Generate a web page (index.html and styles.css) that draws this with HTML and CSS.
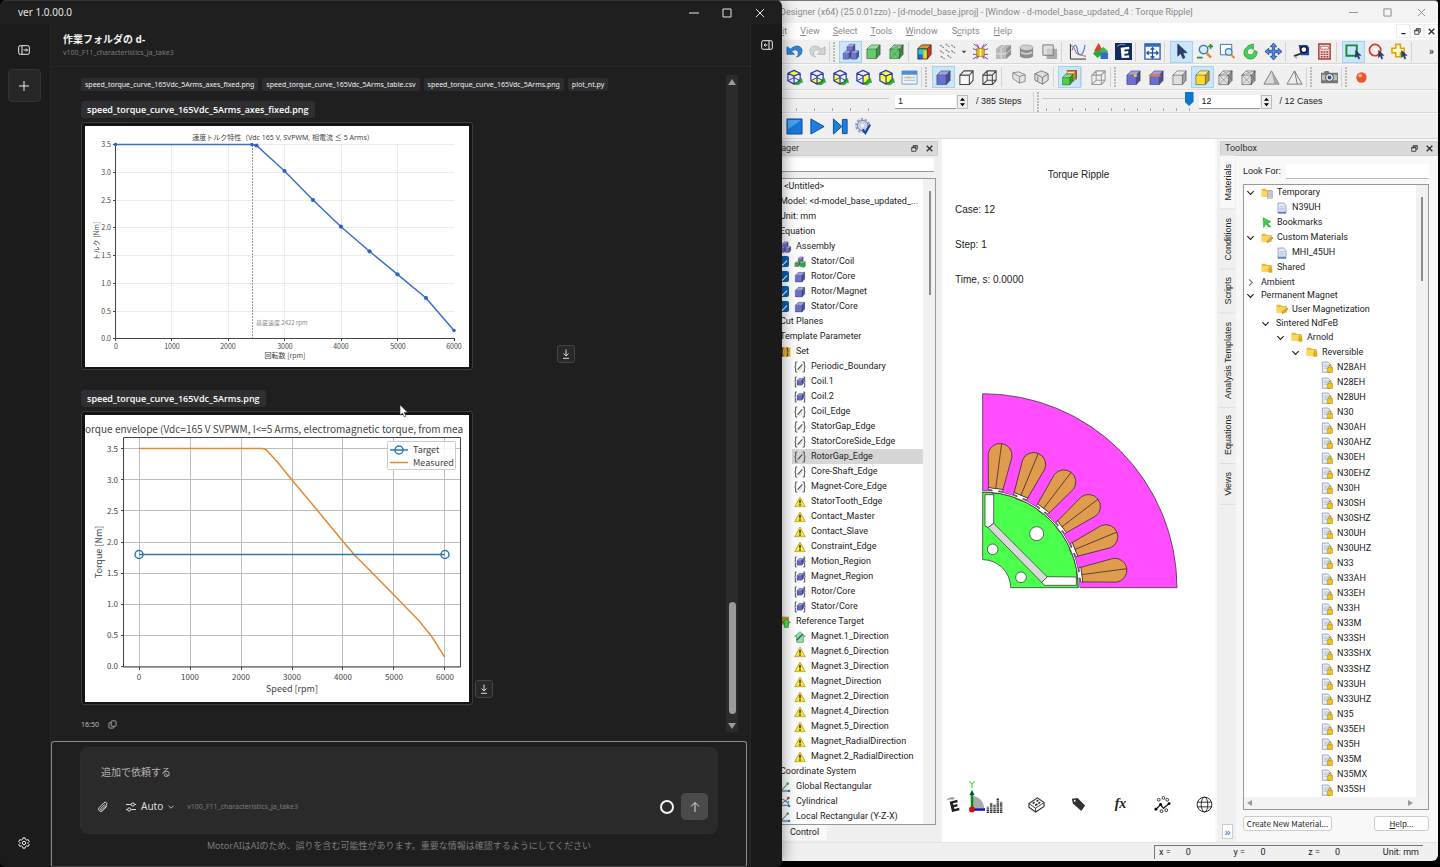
FILE: index.html
```html
<!DOCTYPE html>
<html lang="ja">
<head>
<meta charset="utf-8">
<title>MotorAI</title>
<link rel="stylesheet" href="styles.css">
</head>
<body>
<svg class="defs" aria-hidden="true">
  <symbol id="cube" viewBox="0 0 18 18"><path d="M2 6.5h10v10H2z" fill="currentColor"/><path d="M2 6.5 6.5 2H16l-4 4.500z" fill="currentColor"/><path d="M2 6.500 6.500 2H16l-4 4.500z" fill="#fff" opacity=".35"/><path d="M12 6.500 16 2v10l-4 4.500z" fill="currentColor"/><path d="M12 6.500 16 2v10l-4 4.500z" opacity=".28"/><path d="M2 6.500 6.500 2H16v10l-4 4.500H2zM2 6.500h10v10M12 6.500 16 2" fill="none" stroke="#000" stroke-opacity=".45" stroke-width=".9"/></symbol>
  <symbol id="wire" viewBox="0 0 18 18"><path d="M2 6.500h10v10H2zM2 6.500 6.500 2H16v10l-4 4.500M12 6.500 16 2" fill="#f6f6f6" stroke="currentColor" stroke-width="1.100"/></symbol>
  <symbol id="wire2" viewBox="0 0 18 18"><path d="M2 6.500h10v10H2zM2 6.500 6.500 2H16v10l-4 4.500M12 6.500 16 2M6.500 2v10H16M6.500 12 2 16.500" fill="none" stroke="currentColor" stroke-width="1.100"/></symbol>
  <symbol id="meshcube" viewBox="0 0 18 18"><use href="#cube"/><path d="m2 6.500 10 10M12 6.500l-10 10M2 6.500 16 2M6.500 2 12 6.500M12 16.500 16 2M12 6.500l4 5.500" stroke="#333" stroke-opacity=".5" stroke-width=".7"/></symbol>
  <symbol id="hex" viewBox="0 0 18 18"><path d="m8.500 1.500 6.500 3v8l-6.500 3.500L2 12.500v-8zM2 4.500l6.500 3 6.500-3M8.500 7.500V16" fill="none" stroke="#2a37b8" stroke-width="1.300" stroke-linejoin="round"/><path d="M10 14.500c2 .5 3.500-.5 4-2l-1.500-.5 4-2 1 4.500-1.500-.7c-1 2.500-3.500 3.500-6 2.700z" fill="#23b52b" stroke="#0c7a16" stroke-width=".5"/></symbol>
  <symbol id="asm" viewBox="0 0 18 18"><g color="#6f74d8"><use href="#cube" x="4" y="0" width="11" height="11"/><use href="#cube" x="0" y="7" width="11" height="11"/><use href="#cube" x="8" y="7" width="11" height="11"/></g></symbol>
  <symbol id="asmcoil" viewBox="0 0 18 18"><g color="#7076c8"><use href="#cube" x="5" y="0" width="10" height="10"/></g><g color="#4fa357"><use href="#cube" x="0" y="7" width="10" height="10"/><use href="#cube" x="8" y="7" width="10" height="10"/></g><circle cx="14" cy="14" r="3.500" fill="#23b13b"/></symbol>
  <symbol id="edge" viewBox="0 0 18 18"><path d="M5 1.500H2.500V8L1 9l1.500 1v6.500H5M13 1.500h2.500V8L17 9l-1.500 1v6.500H13" fill="none" stroke="#444" stroke-width="1.400"/><path d="m5.500 13 7-8" stroke="#48505c" stroke-width="1.800"/><path d="m7.500 14.500 5-5.500" stroke="#bbb" stroke-width="1.200"/></symbol>
  <symbol id="region" viewBox="0 0 18 18"><path d="M4 1.500H2V8L1 9l1 1v6.500h2M14 1.500h2V8l1 1-1 1v6.500h-2" fill="none" stroke="#444" stroke-width="1.400"/><g color="#6166d0"><use href="#cube" x="3" y="2" width="13" height="13"/></g></symbol>
  <symbol id="warn" viewBox="0 0 18 18"><path d="M9 1.500 17 16H1z" fill="#fbe22b" stroke="#a98f1d" stroke-linejoin="round"/><path d="M9 5.500v5.500M9 12.500v2" stroke="#222" stroke-width="2"/></symbol>
  <symbol id="set" viewBox="0 0 18 18"><path d="M1 2h16v14H1z" fill="#e3b437"/><path d="M7 3H5v5L4 9l1 1v5h2M11 3h2v5l1 1-1 1v5h-2" fill="none" stroke="#4a3a10" stroke-width="1.500"/></symbol>
  <symbol id="target" viewBox="0 0 18 18"><path d="M0 1h15v12H0z" fill="#c99a35"/><path d="m11 4 6 6h-3v7H8v-7H5z" fill="#57e05a" stroke="#1b7d27"/></symbol>
  <symbol id="house" viewBox="0 0 18 18"><path d="m9 1 8 7h-3v9H4V8H1z" fill="#8be6a6" stroke="#3f8f59"/><path d="m4 14 9-9" stroke="#48505c" stroke-width="2"/></symbol>
  <symbol id="axes" viewBox="0 0 18 18"><path d="M3 15 12 5" stroke="#555" stroke-width="1.400"/><path d="M3 15h12" stroke="#2b66a5" stroke-width="1.600"/><circle cx="13" cy="4" r="2" fill="#49a84c"/><circle cx="15" cy="15" r="2" fill="#2586c9"/></symbol>
  <symbol id="cyl" viewBox="0 0 18 18"><path d="M2 5c8 0 10 4 13 9M2 13 14 4M3 14h12" fill="none" stroke="#3b78a8" stroke-width="1.500"/><circle cx="14" cy="3" r="2" fill="#c72d2d"/><circle cx="15" cy="15" r="2" fill="#2586c9"/><circle cx="14" cy="9" r="1.500" fill="#49a84c"/></symbol>
  <symbol id="folder" viewBox="0 0 18 18"><path d="M1 2.500h6l1.500 2H16v10H1z" fill="#e9b93a"/><path d="M1 6h15v9H1z" fill="#ffd55c"/></symbol>
  <symbol id="flock" viewBox="0 0 18 18"><use href="#folder"/><path d="M11 10h6v6h-6z" fill="#e0a70f"/><path d="M12.500 10V8.500a1.500 1.500 0 0 1 3 0V10" fill="none" stroke="#a97f17"/></symbol>
  <symbol id="fpen" viewBox="0 0 18 18"><use href="#folder"/><path d="m9 16 1-3 6-6 2 2-6 6z" fill="#f3a530" stroke="#8b7134" stroke-width=".7"/></symbol>
  <symbol id="ftemp" viewBox="0 0 18 18"><use href="#folder"/><path d="M10 6h7v11h-7z" fill="#dfe5ec" stroke="#8793a3"/><path d="M12 8v7M15 8v7" stroke="#8793a3"/></symbol>
  <symbol id="doc" viewBox="0 0 18 18"><path d="M3 1.500h8.500L15 5v12H3z" fill="#e4ecfa" stroke="#72829f"/><path d="M5 7h8M5 9.500h8M5 12h8" stroke="#9fb4da"/><path d="M3 14.500h12V17H3z" fill="#5f7fc0"/></symbol>
  <symbol id="dlock" viewBox="0 0 18 18"><path d="M2 1.500h8.500L14 5v12H2z" fill="#e9eef7" stroke="#79869c"/><path d="M4 6h8M4 8.500h6M4 11h6" stroke="#9fb4da"/><path d="M9.500 10h8v7h-8z" fill="#f3c51a" stroke="#9b7c0c" stroke-width=".7"/><path d="M11.500 10V8a2 2 0 0 1 4 0v2" fill="none" stroke="#a58617" stroke-width="1.300"/></symbol>
  <symbol id="flag" viewBox="0 0 18 18"><path d="m3 1 12 6-5 2.500 5 5-4 .5-4-4-3 5z" fill="#43c94b" stroke="#2a8e36" stroke-width=".7"/></symbol>
  <symbol id="down" viewBox="0 0 10 10"><path d="m1.500 3.500 3.500 3.500 3.500-3.500" fill="none" stroke="#222" stroke-width="1.300"/></symbol>
  <symbol id="right" viewBox="0 0 10 10"><path d="m3.500 1.500 3.500 3.500-3.500 3.500" fill="none" stroke="#777" stroke-width="1.300"/></symbol>
  <symbol id="restore" viewBox="0 0 10 10"><path d="M3 3V1h6v5H7M1 3.500h6V9H1zM1 4h6M3 1.500h6" fill="none" stroke="currentColor" stroke-width="1.200"/></symbol>
  <symbol id="close" viewBox="0 0 10 10"><path d="m1 1 8 8M9 1 1 9" stroke="currentColor" stroke-width="var(--w,1)"/></symbol>
  <symbol id="min" viewBox="0 0 10 10"><path d="M0 5h10" stroke="currentColor"/></symbol>
  <symbol id="max" viewBox="0 0 10 10"><path d="M1 1h8v8H1z" fill="none" stroke="currentColor"/></symbol>
  <symbol id="dl" viewBox="0 0 10 10"><path d="M5 .5v6M2.500 4.500 5 7l2.500-2.500M2 9.300h6" fill="none" stroke="currentColor"/></symbol>
  <symbol id="mag" viewBox="0 0 18 18"><circle cx="8" cy="7" r="4.500" fill="#d6ecfa" stroke="#3c78b8" stroke-width="1.500"/><path d="m11 10.500 5 5" stroke="#d88a33" stroke-width="2.500"/></symbol>
  <symbol id="ptr" viewBox="0 0 18 18"><path d="M5 1v13l3.200-3 2.300 5.500 2.200-1-2.200-5.200H15z" fill="#27406b" stroke="#16294a" stroke-width=".6"/></symbol>
</svg>

<div class="desktop">
<main class="chat">
  <header class="chat-title">
    <span>ver 1.0.00.0</span>
    <div class="caps">
      <button aria-label="最小化"><svg><use href="#min"/></svg></button>
      <button aria-label="最大化"><svg><use href="#max"/></svg></button>
      <button aria-label="閉じる"><svg><use href="#close"/></svg></button>
    </div>
  </header>
  <nav class="rail">
    <button class="rail-btn" aria-label="サイドバーを開く"><svg viewBox="0 0 12 12"><rect x=".7" y="1.700" width="10.600" height="8.600" rx="1.500"/><path d="M4 2v8M5.500 6h4M8 4.500 9.500 6 8 7.500"/></svg></button>
    <button class="rail-btn boxed" aria-label="新しいチャット"><svg viewBox="0 0 12 12"><path d="M6 1v10M1 6h10"/></svg></button>
    <button class="rail-btn gear" aria-label="設定"><svg viewBox="0 0 12 12"><path d="m5 .8 2 0 .4 1.500 1.300.8 1.500-.5 1 1.800L10.100 5.500v1l1.100 1.100-1 1.800-1.500-.5-1.300.8L7 11.200H5l-.4-1.500-1.300-.8-1.500.5-1-1.800L1.900 6.500v-1L.8 4.400l1-1.800 1.500.5 1.300-.8z"/><circle cx="6" cy="6" r="1.700"/></svg></button>
  </nav>
  <section class="thread">
    <header class="thread-head">
      <h1>作業フォルダの d-</h1>
      <p>v100_F11_characteristics_ja_take3</p>
    </header>
    <div class="scroll">
      <div class="messages">
        <div class="chips">
          <a href="#f1">speed_torque_curve_165Vdc_5Arms_axes_fixed.png</a>
          <a href="#f2">speed_torque_curve_165Vdc_5Arms_table.csv</a>
          <a href="#f3">speed_torque_curve_165Vdc_5Arms.png</a>
          <a href="#f4">plot_nt.py</a>
        </div>
        <h2 class="file" id="f1">speed_torque_curve_165Vdc_5Arms_axes_fixed.png</h2>
        <div class="shot wide">
          <figure>
            <svg class="chart one" viewBox="0 0 384 241" role="img" aria-label="速度トルク特性">
              <path class="g1" d="M86.500 18.500v194M143.500 18.500v194M199.500 18.500v194M256.500 18.500v194M312.500 18.500v194M30 18.500h339M30 46.500h339M30 74.500h339M30 101.500h339M30 129.500h339M30 157.500h339M30 185.500h339"/>
              <path class="ax" d="M30.500 18.500v194H369.500M28 18.500h2M28 46.500h2M28 74.500h2M28 101.500h2M28 129.500h2M28 157.500h2M28 185.500h2M28 212.500h2M30.500 212v3M86.500 212v3M143.500 212v3M199.500 212v3M256.500 212v3M312.500 212v3M369.500 212v3"/>
              <path class="dash" d="M167.500 19v193"/>
              <path class="line" d="M30.500 18.500H167l4.500 1 28 25.500 28.500 29 28 26.700 28.500 24.600 28 23 28.500 23.700 28 32.500"/>
              <g class="dots"><circle cx="30.500" cy="18.500" r="1.800"/><circle cx="167" cy="18.500" r="1.800"/><circle cx="171.500" cy="19.500" r="2.100"/><circle cx="199.500" cy="45" r="2.100"/><circle cx="228" cy="74" r="2.100"/><circle cx="256" cy="100.700" r="2.100"/><circle cx="284.500" cy="125.300" r="2.100"/><circle cx="312.500" cy="148.300" r="2.100"/><circle cx="341" cy="172" r="2.100"/><circle cx="369" cy="204.500" r="1.800"/></g>
              <text class="mid ttl1" x="198" y="14">速度トルク特性（Vdc 165 V, SVPWM, 相電流 ≤ 5 Arms）</text>
              <g class="end"><text x="26" y="21">3.5</text><text x="26" y="49">3.0</text><text x="26" y="77">2.5</text><text x="26" y="104">2.0</text><text x="26" y="132">1.5</text><text x="26" y="160">1.0</text><text x="26" y="188">0.5</text><text x="26" y="215">0.0</text></g>
              <g class="mid"><text x="31" y="223">0</text><text x="87" y="223">1000</text><text x="143" y="223">2000</text><text x="200" y="223">3000</text><text x="256" y="223">4000</text><text x="313" y="223">5000</text><text x="369" y="223">6000</text><text x="200" y="232">回転数 [rpm]</text><text transform="translate(14 115) rotate(-90)">トルク [Nm]</text></g>
              <text class="note" x="171" y="199">基底速度 2422 rpm</text>
            </svg>
          </figure>
          <button class="dl" aria-label="ダウンロード"><svg><use href="#dl"/></svg></button>
        </div>
        <h2 class="file" id="f3">speed_torque_curve_165Vdc_5Arms.png</h2>
        <div class="shot">
          <figure>
            <svg class="chart two" viewBox="0 0 384 287" role="img" aria-label="Torque envelope">
              <path class="g2" d="M54.500 23v229M105.500 23v229M156.500 23v229M207.500 23v229M257.500 23v229M308.500 23v229M359.500 23v229M39 251.500h336M39 220.500h336M39 189.500h336M39 158.500h336M39 127.500h336M39 95.500h336M39 64.500h336M39 33.500h336"/>
              <path class="orange" d="M54 33.500H177l4 1 11 12 15 18.500 25.500 30.500 25.500 31 12 14 13 13 25.500 26 25.700 26.500 12.500 15.500 13 20.700"/>
              <path class="ax" d="M38.500 22.500h337v229.500h-337zM36 251.500h3M36 220.500h3M36 189.500h3M36 158.500h3M36 127.500h3M36 95.500h3M36 64.500h3M36 33.500h3M54.500 252v3M105.500 252v3M156.500 252v3M207.500 252v3M257.500 252v3M308.500 252v3M359.500 252v3"/>
              <path class="teal" d="M54 139.500h306"/><circle class="teal" cx="54" cy="139.500" r="4"/><circle class="teal" cx="360" cy="139.500" r="4"/>
              <rect class="legend" x="302.500" y="26.500" width="68" height="28" rx="1"/>
              <path class="teal" d="M305 35h18"/><circle class="teal" cx="314" cy="35" r="4"/><path class="orange" d="M305 47.500h18"/>
              <g class="big"><text x="328" y="38">Target</text><text x="328" y="51">Measured</text></g>
              <text class="head" x="0" y="18">orque envelope (Vdc=165 V SVPWM, I&lt;=5 Arms, electromagnetic torque, from mea</text>
              <g class="end"><text x="33" y="37">3.5</text><text x="33" y="68">3.0</text><text x="33" y="99">2.5</text><text x="33" y="130">2.0</text><text x="33" y="161">1.5</text><text x="33" y="192">1.0</text><text x="33" y="223">0.5</text><text x="33" y="254">0.0</text></g>
              <g class="mid"><text x="54" y="265">0</text><text x="105" y="265">1000</text><text x="156" y="265">2000</text><text x="207" y="265">3000</text><text x="258" y="265">4000</text><text x="309" y="265">5000</text><text x="360" y="265">6000</text></g>
              <g class="mid big"><text x="207" y="277">Speed [rpm]</text><text transform="translate(17 137) rotate(-90)">Torque [Nm]</text></g>
            </svg>
          </figure>
          <button class="dl" aria-label="ダウンロード"><svg><use href="#dl"/></svg></button>
        </div>
        <div class="stamp"><time>16:50</time><button aria-label="コピー"><svg viewBox="0 0 10 10"><rect x="3.500" y="1" width="5.500" height="6" rx="1"/><path d="M3.500 3H2a1 1 0 0 0-1 1v4a1 1 0 0 0 1 1h3.500a1 1 0 0 0 1-1V7"/></svg></button></div>
      </div>
      <div class="bar"><i class="up"></i><i class="thumb"></i><i class="dn"></i></div>
    </div>
    <form class="composer">
      <div class="card">
        <textarea aria-label="メッセージ" rows="1" placeholder="追加で依頼する"></textarea>
        <div class="tools">
          <button type="button" class="flat" aria-label="添付"><svg viewBox="0 0 12 12"><path d="M10 5 5.500 9.800a2.300 2.300 0 0 1-3.300-3.200L7 1.700a1.700 1.700 0 0 1 2.400 2.400L4.900 8.700a.8.8 0 0 1-1.200-1.200L7.800 3.500"/></svg></button>
          <button type="button" class="flat auto"><svg viewBox="0 0 12 12"><path d="M1 3.500h5M9.500 3.500H11M1 8.500h1.500M6 8.500h5"/><circle cx="7.800" cy="3.500" r="1.600"/><circle cx="4.200" cy="8.500" r="1.600"/></svg>Auto<svg class="tiny" viewBox="0 0 10 10"><path d="m2 3.500 3 3 3-3"/></svg></button>
          <span class="path">v100_F11_characteristics_ja_take3</span>
          <span class="ring"></span>
          <button type="button" class="send" aria-label="送信"><svg viewBox="0 0 12 12"><path d="M6 11V1.500M2 5.500l4-4 4 4"/></svg></button>
        </div>
      </div>
      <p>MotorAIはAIのため、誤りを含む可能性があります。重要な情報は確認するようにしてください</p>
    </form>
  </section>
  <aside class="side"><button class="rail-btn" aria-label="パネルを開く"><svg viewBox="0 0 12 12"><rect x=".7" y="1.700" width="10.600" height="8.600" rx="1.500"/><path d="M8 2v8M6.500 6H3M4.500 4.500 3 6l1.500 1.500"/></svg></button></aside>
  <svg class="pointer" viewBox="0 0 10 14"><path d="M1 .8v10.500l2.500-2.200L5.300 13l1.700-.8-1.700-3.800h3.400z"/></svg>
</main>

<section class="cad">
  <header class="cad-title"><span>Designer (x64) (25.0.01zzo) - [d-model_base.jproj] - [Window - d-model_base_updated_4 : Torque Ripple]</span>
    <div class="caps"><button aria-label="Minimize"><svg><use href="#min"/></svg></button><button aria-label="Maximize"><svg><use href="#max"/></svg></button><button aria-label="Close"><svg><use href="#close"/></svg></button></div>
  </header>
  <nav class="menu"><a href="#e">Ed<u>i</u>t</a><a href="#v"><u>V</u>iew</a><a href="#s"><u>S</u>elect</a><a href="#t"><u>T</u>ools</a><a href="#w"><u>W</u>indow</a><a href="#c">S<u>c</u>ripts</a><a href="#h"><u>H</u>elp</a>
    <div class="mdi"><button aria-label="Minimize child"><svg viewBox="0 0 10 10"><path d="M2 8h6" stroke="#222" stroke-width="2"/></svg></button><button aria-label="Restore child"><svg><use href="#restore"/></svg></button><button class="x" aria-label="Close child"><svg><use href="#close"/></svg></button></div>
  </nav>
  <div class="bar-row">
    <button aria-label="Undo"><svg viewBox="0 0 18 18"><path d="M1 4v8h8l-3-3c3-3 7-2 7 2 0 2-1 3-2 4 4-1 6-3 6-7 0-5-7-7-12-1.500z" fill="#2e86d6" stroke="#14589e" stroke-width=".7"/></svg></button>
    <button aria-label="Redo"><svg viewBox="0 0 18 18"><path d="M17 4v8H9l3-3C9 6 5 7 5 11c0 2 1 3 2 4-4-1-6-3-6-7 0-5 7-7 12-1.500z" fill="#d3d3d3" stroke="#a8a8a8" stroke-width=".7"/></svg></button>
    <i class="grip w10"></i>
    <button class="on" aria-label="Geometry"><svg><use href="#asm"/></svg></button>
    <button class="green" aria-label="Solid"><svg><use href="#cube"/></svg></button>
    <button class="green" aria-label="Mesh"><svg><use href="#meshcube"/></svg></button>
    <i class="sep"></i>
    <button aria-label="Contour"><svg viewBox="0 0 18 18"><path d="M2 6h10v11H2z" fill="#43c86f"/><path d="M2 12h5v5H2z" fill="#2364dc"/><path d="M2 6h5v6H2z" fill="#25c6d8"/><path d="M8 8h4v9H8z" fill="#f2d629"/><path d="m2 6 4-4h10l-4 4z" fill="#ef8f25"/><path d="m12 6 4-4v10l-4 5z" fill="#d53422"/><path d="m2 6 4-4h10v10l-4 5H2zM2 6h10v11M12 6l4-4" fill="none" stroke="#222" stroke-width=".8"/></svg></button>
    <button aria-label="Vectors"><svg viewBox="0 0 18 18"><path d="m1 2 4 3M7 1l4 3M13 2l4 3M1 8l4 3M7 7l4 3M13 8l4 3M2 14l4 3M9 13l4 3" stroke="#777" stroke-width="1.100" stroke-dasharray="2.500 .8"/></svg></button>
    <button class="drop" aria-label="Vector options"><svg viewBox="0 0 10 10"><path d="M1 3h8L5 7z" fill="#444"/></svg></button>
    <button aria-label="Flux lines"><svg viewBox="0 0 18 18"><path d="M8 6 2 1M8 6 5 1M10 6l6-5M10 6l3-5M8 13l-7 4M8 13l-3 4M10 13l7 4M10 13l3 4M6 8 1 6M12 8l5-2M6 12H1M12 12h5" stroke="#8136a8"/><path d="M5 6h8v8H5z" fill="#e3b522" stroke="#8b6b08" stroke-width=".7"/><path d="M9 6v8" stroke="#fff08a" stroke-width="2"/></svg></button>
    <button aria-label="Section"><svg viewBox="0 0 18 18"><path d="m1 6 5-4h11v10l-5 5H1z" fill="#b9b9b9"/><path d="m12 6 5-4v10l-5 5z" fill="#8f8f8f"/><path d="M6.500 6v11M1 11.500h11l5-5M6 6l5-4" fill="none" stroke="#e3e3e3"/></svg></button>
    <button aria-label="Isosurface"><svg viewBox="0 0 18 18"><path d="M2 5v9c2 3 12 3 14 0V5z" fill="#8c8c8c"/><ellipse cx="9" cy="5" rx="7" ry="3" fill="#cfcfcf" stroke="#888" stroke-width=".6"/><path d="M3 10c4 2 8 2 12 0" stroke="#ccc" fill="none" stroke-width="2"/></svg></button>
    <button aria-label="Layers"><svg viewBox="0 0 18 18"><path d="M6 6h11v11H6z" fill="#aaa"/><path d="M2 2h11v11H2z" fill="#d8d8d8" fill-opacity=".7" stroke="#777"/></svg></button>
    <i class="sep"></i>
    <button aria-label="Graph"><svg viewBox="0 0 18 18"><path d="M1.500 1v16H18" fill="none" stroke="#222"/><path d="M2 3c5 0 4 9 8 9s4 2 8 2" fill="none" stroke="#d43c3c"/><path d="M3 8c3-8 5-7 6 0s6 7 8-6" fill="none" stroke="#3b83d8" stroke-width="1.200"/></svg></button>
    <button aria-label="Probe"><svg viewBox="0 0 18 18"><path d="m7 0 5 9H2z" fill="#e23a2b"/><path d="m12 4 5 5-5 5-5-5z" fill="#3cba3e"/><path d="m1 11 5-4 5 4-5 5z" fill="#28a93a"/><path d="M9 10h8v7H9z" fill="#3a67d0"/></svg></button>
    <button aria-label="Express"><svg viewBox="0 0 18 18"><path d="M0 0h18v18H0z" fill="#102b61"/><path d="m6 5 9-1v2.500l-5 .5v2l4-.5V11l-4 .5v2l5-.5v2.500L7 16z" fill="#fff"/><path d="M2 4c3-3 6-3 9-2" stroke="#8ea6d6" fill="none"/></svg></button>
    <i class="sep w6"></i>
    <button aria-label="Fit all"><svg viewBox="0 0 18 18"><path d="M1 1h16v16H1z" fill="#fff" stroke="#1f5cb0" stroke-width="1.400"/><path d="M1 1h16v3H1z" fill="#2c6bc4"/><path d="M9 5v11M3 10.500h12M7 7l2-2 2 2M7 14l2 2 2-2M5 8.500l-2 2 2 2M13 8.500l2 2-2 2" stroke="#1b4f9f" fill="none" stroke-width="1.300"/></svg></button>
    <i class="sep w6"></i>
    <button class="on" aria-label="Select"><svg><use href="#ptr"/></svg></button>
    <button aria-label="Zoom"><svg viewBox="0 0 18 18"><use href="#mag"/><path d="M13 3.500h5M15.500 1v5M1 15.500h6" stroke="#20962a" stroke-width="1.800"/></svg></button>
    <button aria-label="Zoom area"><svg viewBox="0 0 18 18"><path d="M1.500 1.500h12v11h-12z" fill="#fff" stroke="#3c6eb3"/><use href="#mag" x="4" y="4" width="14" height="14"/></svg></button>
    <button aria-label="Rotate"><svg viewBox="0 0 18 18"><path d="M6 3 12 1v6l-2-1.500C6 6 5 9 6 11s5 2 6 0l1-3 3 1c0 5-3 8-7 8s-7-3-7-7c0-3 2-5 4.500-6z" fill="#46d354" stroke="#1b8e2a" stroke-width=".7"/></svg></button>
    <button aria-label="Pan"><svg viewBox="0 0 18 18"><path d="m9 0 3.500 4h-2.300v3.800H14V5.500L18 9l-4 3.500v-2.300h-3.800V14h2.300L9 18l-3.500-4h2.300v-3.800H4v2.300L0 9l4-3.500v2.300h3.800V4H5.500z" fill="#4d8ce0" stroke="#193d83" stroke-width=".8"/></svg></button>
    <i class="sep"></i>
    <button aria-label="Measure"><svg viewBox="0 0 18 18"><path d="M6 2h9l2 3v8H8z" fill="#1842b8"/><circle cx="11.500" cy="7" r="3.200" fill="#fff" stroke="#111" stroke-width="1.300"/><path d="m1 14 8-3" stroke="#333" stroke-width="2"/><path d="M1 14h3v3z" fill="#999"/></svg></button>
    <button aria-label="Calculator"><svg viewBox="0 0 18 18"><path d="M3 1h12v16H3z" fill="#f4d9d5" stroke="#9b3c37" stroke-width="1.500"/><path d="M5 3.500h8v3H5z" fill="#fff" stroke="#9b3c37" stroke-width=".7"/><path d="M5 9.500h8M5 12h8M5 14.500h8" stroke="#a33" stroke-width="1.500" stroke-dasharray="2 1"/></svg></button>
    <i class="sep w6"></i>
    <button class="on" aria-label="Rectangle select"><svg viewBox="0 0 18 18"><path d="M1.500 2.500h11v11h-11z" fill="none" stroke="#148a39" stroke-width="2"/><use href="#ptr" x="8" y="7" width="11" height="11"/></svg></button>
    <button aria-label="Circle select"><svg viewBox="0 0 18 18"><circle cx="7.500" cy="7.500" r="6" fill="none" stroke="#d83a2b" stroke-width="1.800"/><use href="#ptr" x="8" y="7" width="11" height="11"/></svg></button>
    <button aria-label="Polygon select"><svg viewBox="0 0 18 18"><path d="M5 1.500h5v4h4v5h-4v4H5v-4H1v-5h4z" fill="#fff9cf" stroke="#e2a60c" stroke-width="1.700"/><use href="#ptr" x="8" y="7" width="11" height="11"/></svg></button>
    <i class="sep"></i>
    <span class="more">»</span>
  </div>
  <div class="bar-row tall">
    <button aria-label="Top"><svg viewBox="0 0 18 18"><path d="m8.500 1.500 6.500 3-6.500 3-6.500-3z" fill="#ff3"/><use href="#hex"/><path d="M2 12.500 8.500 9l6.500 3.500" fill="none" stroke="#2a37b8"/></svg></button>
    <button aria-label="Bottom"><svg viewBox="0 0 18 18"><path d="m8.500 9 6.500 3.500L8.500 16 2 12.500z" fill="#ff3"/><use href="#hex"/><path d="m2 12.500 6.500-3.500 6.500 3.500" fill="none" stroke="#2a37b8"/></svg></button>
    <button aria-label="Left"><svg viewBox="0 0 18 18"><path d="M2 4.500 8.500 8v8L2 12.500z" fill="#ff3"/><use href="#hex"/><path d="M2 12.500 8.500 9l6.500 3.500" fill="none" stroke="#2a37b8"/></svg></button>
    <button aria-label="Right"><svg viewBox="0 0 18 18"><path d="M15 4.500 8.500 8v8l6.500-3.500z" fill="#ff3"/><use href="#hex"/><path d="M2 12.500 8.500 9" fill="none" stroke="#2a37b8"/></svg></button>
    <button aria-label="Isometric"><svg viewBox="0 0 18 18"><path d="m8.500 1.500 6.500 3v8L8.500 16 2 12.500v-8z" fill="#ff3"/><use href="#hex"/></svg></button>
    <button aria-label="View list"><svg viewBox="0 0 18 18"><path d="M1 2h16v14H1z" fill="#eef3fa" stroke="#7c9fc9"/><path d="M1 2h16v4H1z" fill="#4a8fd4"/><path d="M3 9h12M3 12h12" stroke="#b9c7d9" stroke-width="1.500"/><path d="M6 9h4" stroke="#e3c44c" stroke-width="2"/></svg></button>
    <i class="grip w11"></i>
    <button class="on blue" aria-label="Shaded"><svg><use href="#cube"/></svg></button>
    <button class="dark" aria-label="Hidden line"><svg><use href="#wire"/></svg></button>
    <button class="dark" aria-label="Wireframe"><svg><use href="#wire2"/></svg></button>
    <i class="sep w6"></i>
    <button aria-label="Clip"><svg viewBox="0 0 18 18"><path d="M3 4 9 3l7 3v7l-6 2-7-5z" fill="#e4e4e4" stroke="#888"/><path d="m3 4 7 4v7M10 8l6-2" fill="none" stroke="#888"/></svg></button>
    <button aria-label="Clip box"><svg viewBox="0 0 18 18"><path d="m2 5 7-3 7 3v7l-6 4-8-4z" fill="#e0e0e0" stroke="#777"/><path d="m2 5 8 4v7M10 9l6-4M5 8v5" fill="none" stroke="#777"/></svg></button>
    <i class="sep"></i>
    <button class="on" aria-label="Overlay"><svg viewBox="0 0 18 18"><g color="#f6e53b"><use href="#cube" x="4" y="0" width="14" height="14"/></g><path d="M6 2h10v9" fill="none" stroke="#c8291f" stroke-width="1.300"/><g color="#4bcf45"><use href="#cube" x="0" y="4" width="14" height="14"/></g></svg></button>
    <i class="sep w6"></i>
    <button class="mid-gray" aria-label="Transparent"><svg><use href="#wire2"/></svg></button>
    <i class="grip w12"></i>
    <button class="blue" aria-label="Vertex"><svg viewBox="0 0 18 18"><use href="#cube"/><circle cx="11" cy="7" r="1.800" fill="#f3c423"/></svg></button>
    <button class="blue" aria-label="Edge"><svg viewBox="0 0 18 18"><use href="#cube"/><path d="M1 7h12" stroke="#ef7d2b" stroke-width="1.800"/></svg></button>
    <button class="light" aria-label="Face"><svg><use href="#cube"/></svg></button>
    <button class="on yellow" aria-label="Part"><svg><use href="#cube"/></svg></button>
    <button class="light" aria-label="Element"><svg><use href="#meshcube"/></svg></button>
    <button class="light" aria-label="Node"><svg><use href="#meshcube"/></svg></button>
    <button aria-label="Element face"><svg viewBox="0 0 18 18"><path d="m9 2 8 14H1z" fill="#dcdcdc" stroke="#777"/><path d="m9 2 3 14 5 0z" fill="#a7a7a7"/></svg></button>
    <button aria-label="Element edge"><svg viewBox="0 0 18 18"><path d="m9 2 8 14H1zM9 2l3 14" fill="#eee" stroke="#777"/></svg></button>
    <i class="grip w12"></i>
    <button aria-label="Capture"><svg viewBox="0 0 18 18"><path d="M0 4h3l1-2h4l1 2h9v11H0z" fill="#777"/><path d="M1 6h16v6H1z" fill="#bcbcbc"/><circle cx="9" cy="9" r="4.200" fill="#eee" stroke="#444"/><circle cx="9" cy="9" r="2" fill="#36507c"/></svg></button>
    <i class="grip"></i>
    <button aria-label="Record"><svg viewBox="0 0 18 18"><circle cx="9" cy="9" r="5.500" fill="#ef5427"/><circle cx="7.500" cy="7" r="2" fill="#ffae8c"/></svg></button>
  </div>
  <div class="bar-row steps">
    <input class="range first" type="range" min="1" max="385" value="1" aria-label="Step">
    <div class="spin"><input type="text" value="1" aria-label="Step number"><button aria-label="Change step"><svg viewBox="0 0 10 14"><path d="M2 5.500 5 2l3 3.500zM2 8.500 5 12l3-3.500z"/></svg></button></div>
    <span class="of">/ 385 Steps</span>
    <i class="grip"></i>
    <input class="range" type="range" min="1" max="12" value="12" aria-label="Case">
    <div class="spin"><input type="text" value="12" aria-label="Case number"><button aria-label="Change case"><svg viewBox="0 0 10 14"><path d="M2 5.500 5 2l3 3.500zM2 8.500 5 12l3-3.500z"/></svg></button></div>
    <span class="of">/ 12 Cases</span>
  </div>
  <div class="bar-row tall">
    <button aria-label="Stop"><svg viewBox="0 0 18 18"><path d="M1 1h16v16H1z" fill="#1878d8" stroke="#0a4a9a"/><path d="M2 2h14L2 12z" fill="#4aa3f0"/></svg></button>
    <button aria-label="Play"><svg viewBox="0 0 18 18"><path d="m2 1 14 8-14 8z" fill="#1c80e0" stroke="#0a4a9a"/></svg></button>
    <button aria-label="Next"><svg viewBox="0 0 18 18"><path d="m1.500 1 9 8-9 8zM11 1.500h5v15h-5z" fill="#1c80e0" stroke="#0a4a9a"/></svg></button>
    <button aria-label="Animation settings"><svg viewBox="0 0 18 18"><circle cx="8" cy="8" r="6.500" fill="none" stroke="#9ea5c4" stroke-width="3" stroke-dasharray="2.500 1.500"/><circle cx="8" cy="8" r="5.500" fill="#c9cee4" stroke="#7a82a8"/><circle cx="8" cy="8" r="2" fill="#f0f0f0"/><path d="m8 12 3 4 5-9" fill="none" stroke="#174a9c" stroke-width="2.200"/></svg></button>
  </div>

  <div class="work">
    <section class="manager">
      <header class="dock"><span>Manager</span><button aria-label="Float"><svg><use href="#restore"/></svg></button><button class="x" aria-label="Close panel"><svg><use href="#close"/></svg></button></header>
      <input class="find" type="text" aria-label="Filter">
      <div class="tree">
        <ul>
          <li class="a first">&lt;Untitled&gt;</li>
          <li class="a">Model: &lt;d-model_base_updated_...</li>
          <li class="a">Unit: mm</li>
          <li class="a">Equation</li>
          <li class="b"><svg><use href="#asm"/></svg>Assembly</li>
          <li class="ck"><input type="checkbox" checked id="c1"><svg><use href="#asmcoil"/></svg><label for="c1">Stator/Coil</label></li>
          <li class="ck"><input type="checkbox" checked id="c2"><svg class="blue"><use href="#cube"/></svg><label for="c2">Rotor/Core</label></li>
          <li class="ck"><input type="checkbox" checked id="c3"><svg class="blue"><use href="#cube"/></svg><label for="c3">Rotor/Magnet</label></li>
          <li class="ck"><input type="checkbox" checked id="c4"><svg class="blue"><use href="#cube"/></svg><label for="c4">Stator/Core</label></li>
          <li class="a">Cut Planes</li>
          <li class="a">Template Parameter</li>
          <li class="b"><svg><use href="#set"/></svg>Set</li>
          <li><svg><use href="#edge"/></svg>Periodic_Boundary</li>
          <li><svg><use href="#region"/></svg>Coil.1</li>
          <li><svg><use href="#region"/></svg>Coil.2</li>
          <li><svg><use href="#edge"/></svg>Coil_Edge</li>
          <li><svg><use href="#edge"/></svg>StatorGap_Edge</li>
          <li><svg><use href="#edge"/></svg>StatorCoreSide_Edge</li>
          <li class="sel"><svg><use href="#edge"/></svg>RotorGap_Edge</li>
          <li><svg><use href="#edge"/></svg>Core-Shaft_Edge</li>
          <li><svg><use href="#edge"/></svg>Magnet-Core_Edge</li>
          <li><svg><use href="#warn"/></svg>StatorTooth_Edge</li>
          <li><svg><use href="#warn"/></svg>Contact_Master</li>
          <li><svg><use href="#warn"/></svg>Contact_Slave</li>
          <li><svg><use href="#warn"/></svg>Constraint_Edge</li>
          <li><svg><use href="#region"/></svg>Motion_Region</li>
          <li><svg><use href="#region"/></svg>Magnet_Region</li>
          <li><svg><use href="#region"/></svg>Rotor/Core</li>
          <li><svg><use href="#region"/></svg>Stator/Core</li>
          <li class="b"><svg><use href="#target"/></svg>Reference Target</li>
          <li><svg><use href="#house"/></svg>Magnet.1_Direction</li>
          <li><svg><use href="#warn"/></svg>Magnet.6_Direction</li>
          <li><svg><use href="#warn"/></svg>Magnet.3_Direction</li>
          <li><svg><use href="#warn"/></svg>Magnet_Direction</li>
          <li><svg><use href="#warn"/></svg>Magnet.2_Direction</li>
          <li><svg><use href="#warn"/></svg>Magnet.4_Direction</li>
          <li><svg><use href="#warn"/></svg>Magnet.5_Direction</li>
          <li><svg><use href="#warn"/></svg>Magnet_RadialDirection</li>
          <li><svg><use href="#warn"/></svg>Magnet.2_RadialDirection</li>
          <li class="a">Coordinate System</li>
          <li class="b"><svg><use href="#axes"/></svg>Global Rectangular</li>
          <li class="b"><svg><use href="#cyl"/></svg>Cylindrical</li>
          <li class="b"><svg><use href="#axes"/></svg>Local Rectangular (Y-Z-X)</li>
        </ul>
        <div class="track"><i></i></div>
      </div>
      <button class="tab-ctl">Control</button>
    </section>

    <section class="view">
      <p class="ttl">Torque Ripple</p>
      <p>Case: 12</p><p>Step: 1</p><p>Time, s: 0.0000</p>
      <svg class="motor" viewBox="125 38 588 588">
        <path d="M127 40A583 583 0 0 1 710 622H418A291 291 0 0 0 127 331Z" fill="#ff4dff"/>
        <path d="M127 335A287 287 0 0 1 414 622H211A84 84 0 0 0 127 538Z" fill="#4dff4d"/>
        <defs><g id="slot"><path d="M-10-285V-294H-22V-301H22V-294H10V-285Z" fill="#fff"/><path d="M-22-300-36-400A36 36 0 0 1 36-400L22-300Z" fill="#e09b4f"/><path d="M0-300V-436"/></g></defs>
        <g transform="translate(127 622)"><use href="#slot" transform="rotate(7.500)"/><use href="#slot" transform="rotate(22.500)"/><use href="#slot" transform="rotate(37.500)"/><use href="#slot" transform="rotate(52.500)"/><use href="#slot" transform="rotate(67.500)"/><use href="#slot" transform="rotate(82.500)"/></g>
        <path d="M127 333A289 289 0 0 1 416 622" fill="none" stroke="#fff" stroke-width="3"/>
        <path d="M127 335A287 287 0 0 1 414 622" fill="none"/>
        <path d="M134 343H160V429L144 441 134 437ZM321 589 408 590V615H313L303 606Z" fill="#fff"/>
        <path d="M160 429 321 590 304 606 143 442Z" fill="#d9d9d9"/>
        <circle cx="289" cy="460" r="21" fill="#fff"/><circle cx="157" cy="507" r="16" fill="#fff"/><circle cx="242" cy="591" r="16" fill="#fff"/>
      </svg>
      <div class="dockbar">
        <svg viewBox="0 0 18 18"><path d="M2 5c2-3 6-5 10-3l-3 2c-3-1-5 0-7 1z" fill="#999"/><path d="m6 6 8-2 .5 2.500-5 1.200.5 1.800 4-.9.500 2.200-4 1 .5 1.900 5-1.200.5 2.500-8 2z" fill="#222"/></svg>
        <svg viewBox="0 0 18 18"><path d="M2 18V11M5.500 18V7M9 18V9M12.500 18V2M16 18V6" stroke="#333" stroke-width="2.600" stroke-dasharray="1.500 .7"/></svg>
        <svg viewBox="0 0 18 18"><path d="m1 8 9-6 7 5v4l-9 6-7-5z" fill="#fff" stroke="#333" stroke-width="1.200"/><path d="m1 8 7 5 9-6M8 13v4" fill="none" stroke="#333"/><path d="m5 8 2-1.500M9 5.500l2-1M7.500 10 10 8.500M11 8l2-1.500" stroke="#333" stroke-width="1.800"/></svg>
        <svg viewBox="0 0 18 18"><path d="m2 3 6-1 8 8-4 6-9-8z" fill="#333"/><circle cx="5" cy="5" r="1" fill="#fff"/></svg>
        <span class="fx">fx</span>
        <svg viewBox="0 0 18 18"><path d="m2 14 5-5 3 4 6-5" fill="none" stroke="#222" stroke-width="1.500"/><g fill="#fff" stroke="#333"><circle cx="5" cy="4" r="1.500"/><circle cx="10" cy="2" r="1.500"/><circle cx="14" cy="4" r="1.500"/><circle cx="8" cy="16" r="1.500"/><circle cx="13" cy="15" r="1.500"/></g><circle cx="2" cy="14" r="1.500"/><circle cx="16" cy="8" r="1.500"/><circle cx="7" cy="9" r="1.500"/></svg>
        <svg viewBox="0 0 18 18"><g fill="none" stroke="#222"><circle cx="9" cy="9" r="7.800"/><ellipse cx="9" cy="9" rx="3.500" ry="7.800"/><path d="M1 6.500h16M1 11.500h16"/></g></svg>
        <svg class="triad" viewBox="0 0 22 36"><path d="M4 28V16a12 12 0 0 1 12 12z" fill="#aaa"/><path d="M4 29V14" stroke="#0a8a1c" stroke-width="2.500"/><path d="m4 10 2.500 5h-5z" fill="#053"/><path d="M4 29.500h13" stroke="#1010b0" stroke-width="2.500"/><circle cx="4" cy="29.500" r="3" fill="#c8140f"/><path d="m1.500 1 2.500 3.500L6.500 1M4 4.500V8" fill="none" stroke="#4fdc50" stroke-width="1.200"/></svg>
      </div>
    </section>

    <section class="toolbox">
      <header class="dock"><span>Toolbox</span><button aria-label="Float"><svg><use href="#restore"/></svg></button><button class="x" aria-label="Close panel"><svg><use href="#close"/></svg></button></header>
      <div class="tabs"><button class="cur">Materials</button><button>Conditions</button><button>Scripts</button><button>Analysis Templates</button><button>Equations</button><button>Views</button><button class="fold" aria-label="Collapse">»</button></div>
      <div class="pane">
        <div class="look"><label for="lf">Look For:</label><input id="lf" type="text"></div>
        <div class="tree">
          <ul>
            <li class="k0"><button aria-label="Toggle"><svg><use href="#down"/></svg></button><svg><use href="#ftemp"/></svg>Temporary</li>
            <li class="k1"><svg><use href="#doc"/></svg>N39UH</li>
            <li class="k0"><svg><use href="#flag"/></svg>Bookmarks</li>
            <li class="k0"><button aria-label="Toggle"><svg><use href="#down"/></svg></button><svg><use href="#fpen"/></svg>Custom Materials</li>
            <li class="k1"><svg><use href="#doc"/></svg>MHI_45UH</li>
            <li class="k0"><svg><use href="#flock"/></svg>Shared</li>
            <li class="k0 slim"><button aria-label="Toggle"><svg><use href="#right"/></svg></button>Ambient</li>
            <li class="k0 slim"><button aria-label="Toggle"><svg><use href="#down"/></svg></button>Permanent Magnet</li>
            <li class="k1"><svg><use href="#fpen"/></svg>User Magnetization</li>
            <li class="k1 slim"><button aria-label="Toggle"><svg><use href="#down"/></svg></button>Sintered NdFeB</li>
            <li class="k2"><button aria-label="Toggle"><svg><use href="#down"/></svg></button><svg><use href="#flock"/></svg>Arnold</li>
            <li class="k3"><button aria-label="Toggle"><svg><use href="#down"/></svg></button><svg><use href="#flock"/></svg>Reversible</li>
            <li class="k4"><svg><use href="#dlock"/></svg>N28AH</li>
            <li class="k4"><svg><use href="#dlock"/></svg>N28EH</li>
            <li class="k4"><svg><use href="#dlock"/></svg>N28UH</li>
            <li class="k4"><svg><use href="#dlock"/></svg>N30</li>
            <li class="k4"><svg><use href="#dlock"/></svg>N30AH</li>
            <li class="k4"><svg><use href="#dlock"/></svg>N30AHZ</li>
            <li class="k4"><svg><use href="#dlock"/></svg>N30EH</li>
            <li class="k4"><svg><use href="#dlock"/></svg>N30EHZ</li>
            <li class="k4"><svg><use href="#dlock"/></svg>N30H</li>
            <li class="k4"><svg><use href="#dlock"/></svg>N30SH</li>
            <li class="k4"><svg><use href="#dlock"/></svg>N30SHZ</li>
            <li class="k4"><svg><use href="#dlock"/></svg>N30UH</li>
            <li class="k4"><svg><use href="#dlock"/></svg>N30UHZ</li>
            <li class="k4"><svg><use href="#dlock"/></svg>N33</li>
            <li class="k4"><svg><use href="#dlock"/></svg>N33AH</li>
            <li class="k4"><svg><use href="#dlock"/></svg>N33EH</li>
            <li class="k4"><svg><use href="#dlock"/></svg>N33H</li>
            <li class="k4"><svg><use href="#dlock"/></svg>N33M</li>
            <li class="k4"><svg><use href="#dlock"/></svg>N33SH</li>
            <li class="k4"><svg><use href="#dlock"/></svg>N33SHX</li>
            <li class="k4"><svg><use href="#dlock"/></svg>N33SHZ</li>
            <li class="k4"><svg><use href="#dlock"/></svg>N33UH</li>
            <li class="k4"><svg><use href="#dlock"/></svg>N33UHZ</li>
            <li class="k4"><svg><use href="#dlock"/></svg>N35</li>
            <li class="k4"><svg><use href="#dlock"/></svg>N35EH</li>
            <li class="k4"><svg><use href="#dlock"/></svg>N35H</li>
            <li class="k4"><svg><use href="#dlock"/></svg>N35M</li>
            <li class="k4"><svg><use href="#dlock"/></svg>N35MX</li>
            <li class="k4"><svg><use href="#dlock"/></svg>N35SH</li>
          </ul>
          <div class="track"><i></i></div>
          <div class="hbar"><i class="l"></i><i class="r"></i></div>
        </div>
        <div class="acts"><button>Create New Material...</button><button class="help"><u>H</u>elp...</button></div>
      </div>
    </section>
  </div>
  <footer class="status"><div><span>x =</span><b>0</b><span>y =</span><b>0</b><span>z =</span><b>0</b><em>Unit: mm</em></div></footer>
</section>
</div>
</body>
</html>
```

FILE: styles.css
```css
* { box-sizing: border-box; }
html, body { height: 100%; }
body { margin: 0; background: #000; font: 9px/15px "Noto Sans", "Noto Sans CJK JP", sans-serif; color: #222; overflow: hidden; }
h1, h2, p, ul, figure { margin: 0; padding: 0; }
li { list-style: none; }
svg { display: block; flex: none; }
button { border: 0; padding: 0; background: none; font: inherit; color: inherit; display: flex; align-items: center; justify-content: center; flex: none; }
input, textarea { font: inherit; color: inherit; border: 0; outline: 0; padding: 0; margin: 0; min-width: 0; }
a { color: inherit; text-decoration: none; }
.defs { position: absolute; width: 0; height: 0; }
.desktop { display: grid; grid-template-columns: minmax(0, 782fr) minmax(0, 658fr); grid-template-rows: minmax(0, 1fr); height: 100vh; }

/* chat window */
.chat { position: relative; z-index: 2; display: grid; grid-template: 24px minmax(0, 1fr) / 51px minmax(0, 1fr) 32px; background: #1f1f1f; color: #e6e6e6; border-radius: 6px; box-shadow: 0 0 16px rgba(0, 0, 0, .45); overflow: hidden; }
.chat-title { grid-column: 1 / -1; display: flex; align-items: center; justify-content: space-between; padding: 0 17px 0 18px; font-size: 10px; border-top: 1px solid #333; }
.caps { display: flex; gap: 23px; }
.caps svg { width: 10px; height: 10px; }
.rail { display: flex; flex-direction: column; align-items: center; background: #1b1b1b; border-right: 1px solid #272727; padding: 9px 2px 8px 0; gap: 3px; }
.rail-btn { width: 33px; height: 33px; border-radius: 4px; }
.rail-btn svg { width: 12px; height: 12px; fill: none; stroke: #eee; }
.boxed { background: #262626; border: 1px solid #333; }
.gear { margin-top: auto; }
.side { background: #1a1a1a; border-left: 1px solid #262626; padding-top: 4px; }
.side .rail-btn { width: 31px; }
.thread { display: flex; flex-direction: column; min-width: 0; }
.thread-head { height: 43px; padding: 7px 12px; border-bottom: 1px solid #272727; }
.thread-head h1 { font-size: 10px; line-height: 16px; color: #f2f2f2; }
.thread-head p { font-size: 7px; line-height: 12px; color: #7c7c7c; }
.scroll { flex: 1; min-height: 0; display: flex; padding: 8px 12px 9px 0; }
.messages { flex: 1; min-width: 0; padding: 3px 0 0 30px; }
.chips { display: flex; gap: 4px; }
.chips a { background: #2d2d30; border-radius: 2px; padding: 0 4px; font-size: 7px; line-height: 13px; color: #f0f0f0; white-space: nowrap; }
.file { width: max-content; margin: 10px 0 4px; padding: 0 6px; background: #2f2f32; border-radius: 3px; font: 600 9px/17px "Open Sans", sans-serif; color: #fff; }
.shot { display: flex; align-items: flex-end; gap: 2px; }
.shot figure { border: 1px solid #3c3c3c; border-radius: 3px; padding: 3px 3px 2px; background: #141414; min-width: 0; }
.shot.wide { gap: 84px; margin-bottom: 20px; }
.dl { width: 18px; height: 18px; margin-bottom: 7px; border: 1px solid #454545; border-radius: 3px; background: #282828; color: #ddd; }
.dl svg { width: 10px; height: 10px; }
.chart { width: 384px; max-width: 100%; background: #fff; font: 7px "Noto Sans CJK JP", sans-serif; fill: #444; }
.chart.two { font-size: 8px; }
.chart .big { font-size: 9px; }
.chart .head { font-size: 10px; }
.chart .ttl1 { font-family: "Noto Sans", "Noto Sans CJK JP", sans-serif; }
.chart path { fill: none; }
.chart .mid { text-anchor: middle; }
.chart .end { text-anchor: end; }
.g1 { stroke: #ebebeb; }
.g2 { stroke: #bdbdbd; }
.ax { stroke: #444; }
.dash { stroke: #999; stroke-dasharray: 2 1; }
.line { stroke: #3b70c4; stroke-width: 1.5; }
.dots { fill: #2f64c0; }
.note { font-size: 6px; fill: #888; }
.orange { stroke: #e08a33; stroke-width: 1.5; }
.teal { stroke: #2a7ab0; stroke-width: 1.5; fill: none; }
.legend { fill: #fff; fill-opacity: .85; stroke: #ccc; }
.stamp { display: flex; align-items: center; gap: 9px; margin-top: 12px; font-size: 7px; color: #bbb; }
.stamp svg { width: 9px; height: 9px; fill: none; stroke: #aaa; }
.bar { width: 12px; background: #2b2b2b; display: flex; flex-direction: column; align-items: center; justify-content: flex-end; padding: 4px 0 3px; gap: 9px; }
.bar i { width: 0; border: 4px solid transparent; }
.bar .up { border-top: 0; border-bottom: 6px solid #999; margin-bottom: auto; }
.bar .dn { border-bottom: 0; border-top: 6px solid #999; }
.bar .thumb { width: 7px; height: 112px; border: 0; border-radius: 4px; background: #9b9b9b; }
.composer { margin-right: 3px; height: 126px; border: 1px solid #8b8b8b; border-bottom-color: #444; border-radius: 3px; padding: 5px 28px 0 28px; text-align: center; color: #7d7d7d; font-size: 9px; }
.composer p { line-height: 24px; }
.card { height: 87px; background: #2a2a2a; border: 1px solid #2e2e2e; border-radius: 8px; padding: 16px 9px 0 16px; display: flex; flex-direction: column; gap: 12px; }
.card textarea { display: block; height: 17px; line-height: 17px; resize: none; overflow: hidden; background: none; font-size: 10px; margin-left: 4px; color: #ddd; }
.card textarea::placeholder { color: #b4b4b4; opacity: 1; }
.tools { display: flex; align-items: center; color: #ddd; }
.flat svg { width: 12px; height: 12px; fill: none; stroke: #ddd; }
.auto { gap: 4px; margin: 0 12px 0 16px; font-size: 10px; }
.auto .tiny { width: 8px; height: 8px; }
.path { font-size: 7px; color: #7c7c7c; }
.ring { width: 14px; height: 14px; border: 2px solid #f2f2f2; border-radius: 50%; margin: 0 7px 0 auto; }
.send { width: 27px; height: 27px; background: #4a4a4a; border-radius: 5px; }
.send svg { width: 12px; height: 12px; fill: none; stroke: #ddd; }
.pointer { position: absolute; left: 399px; top: 404px; width: 10px; height: 14px; fill: #fff; stroke: #222; stroke-width: .6; }

/* CAD window */
.cad { margin: 0 2px 6px -40px; display: flex; flex-direction: column; background: #f0f0f0; border-radius: 0 4px 6px 0; min-width: 0; border-top: 1px solid #777; overflow: hidden; font-family: Roboto, sans-serif; }
.cad-title { height: 22px; flex: none; padding: 0 12px 0 38px; display: flex; align-items: center; justify-content: space-between; color: #888; white-space: nowrap; background: #f3f3f3; }
.cad-title .caps { gap: 25px; }
.cad-title .caps svg { width: 9px; height: 9px; }
.menu { height: 16px; flex: none; background: #fff; display: flex; align-items: center; gap: 13px; padding: 0 0 0 30px; color: #8a8a8a; }
.menu a:nth-child(n+5) { margin-right: 1px; }
.mdi { margin-left: auto; display: flex; }
.mdi button { width: 14px; height: 14px; border: 1px solid #eee; color: #333; }
.mdi svg, .dock svg { width: 7px; height: 7px; }
.x { --w: 2; }
.bar-row { height: 25px; flex: none; display: flex; align-items: center; padding: 0 4px 0 41px; border-bottom: 1px solid #d9d9d9; border-top: 1px solid #fafafa; }
.tall { height: 26px; }
.bar-row > button { width: 23px; height: 22px; }
.bar-row > button svg { width: 17px; height: 17px; }
.bar-row > .drop { width: 10px; }
.bar-row > .drop svg { width: 6px; height: 6px; }
.bar-row > .on { background: #cce6f9; border: 1px solid #a6d2f2; }
.green { color: #5fcf6a; } .blue { color: #6a6fd6; } .light { color: #dedede; } .yellow { color: #ffd92e; } .dark { color: #444; } .mid-gray { color: #999; }
.sep { width: 5px; height: 20px; flex: none; border-left: 1px solid #d4d4d4; }
.grip { width: 9px; height: 20px; flex: none; border-left: 1px solid #d4d4d4; background: radial-gradient(circle at 1px 1px, #bbb 1px, transparent 1px) 3px 0 / 4px 3px repeat-y; }
.w6 { width: 6px; } .w10 { width: 10px; } .w11 { width: 11px; } .w12 { width: 12px; }
.more { margin-left: auto; font-size: 11px; }
.steps { height: 23px; padding-left: 0; font-family: "Liberation Sans", sans-serif; }
.range { -webkit-appearance: none; appearance: none; width: 152px; height: 20px; margin: 0 5px 0 0; background: linear-gradient(#c9c9c9, #c9c9c9) 0 6px / 100% 1px no-repeat, repeating-linear-gradient(90deg, #aaa 0 1px, transparent 1px 13px) 4px 16px / 100% 3px no-repeat; }
.range.first { width: 147px; margin-right: 6px; background: linear-gradient(#c9c9c9, #c9c9c9) 0 6px / 100% 1px no-repeat, repeating-linear-gradient(90deg, #aaa 0 1px, transparent 1px 18px) 0 16px / 130px 3px no-repeat; }
.range::-webkit-slider-thumb { -webkit-appearance: none; width: 9px; height: 14px; margin-top: -5px; background: #0b78cc; clip-path: polygon(0 0, 100% 0, 100% 70%, 50% 100%, 0 70%); }
.spin { display: flex; width: 73px; height: 14px; }
.spin input { flex: 1; background: #fff; border-bottom: 1px solid #999; padding-left: 3px; }
.spin button { width: 11px; border: 1px solid #bbb; margin-left: 1px; }
.spin svg { width: 9px; height: 12px; }
.of { margin: 0 11px 0 8px; }

.work { flex: 1; min-height: 0; display: grid; grid-template-columns: 196px minmax(0, 1fr) 218px; gap: 0 3px; }
.dock { height: 15px; margin-top: 2px; background: #dadada; border: 1px solid #cfcfcf; display: flex; align-items: center; gap: 8px; padding: 0 4px; color: #333; }
.dock span { flex: 1; }
.manager { display: flex; flex-direction: column; min-height: 0; }
.manager .dock span { flex: none; width: 52px; margin-right: auto; text-align: right; }
.find { height: 14px; margin: 2px 4px 6px 0; background: #fff; border-bottom: 1px solid #999; flex: none; }
.tree { background: #fff; border: 1px solid #999; display: grid; grid-template-columns: minmax(0, 1fr) 12px; min-height: 0; overflow: hidden; }
.manager .tree { flex: 1; margin-right: 2px; border-left: 0; }
.tree ul { display: flex; flex-direction: column; min-width: 0; }
.tree li { flex: none; height: 15px; display: flex; align-items: center; white-space: nowrap; }
.manager li { flex: 1 0 15px; gap: 5px; padding-left: 52px; }
.tree li svg { width: 12px; height: 12px; }
.manager .a { padding-left: 38px; }
.manager .first { padding-left: 42px; }
.manager .b { padding-left: 37px; }
.manager .ck { padding-left: 36px; }
.manager .sel { background: #d6d6d6; margin-left: 50px; padding-left: 2px; }
.ck input { appearance: none; width: 11px; height: 11px; border-radius: 2px; background: #0a5fa8; display: grid; place-items: center; }
.ck input::before { content: ""; width: 6px; height: 3px; border: solid #fff; border-width: 0 0 1px 1px; transform: rotate(-45deg); }
.track { background: #f1f1f1; padding: 12px 0 0 6px; }
.track i { display: block; width: 2px; height: 104px; background: #8c8c8c; }
.tab-ctl { align-self: flex-start; margin: 0 0 2px 40px; width: 45px; height: 15px; background: #f8f8f8; }
.view { position: relative; background: #fff; display: flex; flex-direction: column; padding: 18px 0 20px; margin: 0 0 0 1px; border-right: 2px solid #f8f8f8; font: 10px/35px "Liberation Sans", sans-serif; min-width: 0; }
.view p { padding-left: 13px; }
.view .ttl { text-align: center; padding: 0; }
.motor { width: 196px; height: 196px; margin: 96px 0 0 40px; stroke: #222; stroke-width: 2; }
.dockbar { position: relative; margin-top: auto; display: flex; justify-content: space-between; align-items: center; padding: 0 2px; height: 36px; }
.dockbar svg { width: 17px; height: 17px; }
.fx { width: 17px; text-align: center; font: italic bold 14px "Liberation Serif", serif; }
.dockbar .triad { position: absolute; left: 26px; top: -6px; width: 22px; height: 36px; }
.toolbox { display: grid; grid-template: 17px minmax(0, 1fr) / 16px minmax(0, 1fr); background: #f8f8f8; min-height: 0; }
.toolbox .dock { grid-column: 1 / -1; }
.tabs { display: flex; flex-direction: column; background: #f0f0f0; font: 9px "Liberation Sans", sans-serif; }
.tabs button { writing-mode: vertical-rl; transform: rotate(180deg); width: 15px; padding: 8px 0; border-top: 1px solid #ddd; white-space: nowrap; }
.tabs .cur { background: #f8f8f8; }
.tabs .fold { writing-mode: horizontal-tb; transform: none; margin: auto 0 3px 2px; width: 11px; height: 15px; padding: 0; border: 1px solid #ccc; background: #fff; color: #36b; font-size: 11px; }
.pane { display: flex; flex-direction: column; padding: 8px 9px 11px 7px; min-width: 0; min-height: 0; }
.look { display: flex; align-items: center; gap: 5px; height: 15px; flex: none; margin-bottom: 5px; font-family: "Liberation Sans", sans-serif; }
.look input { flex: 1; height: 15px; background: #fff; border-bottom: 1px solid #bbb; }
.pane .tree { flex: 1; grid-template-rows: minmax(0, 1fr) 12px; }
.pane li { flex: 1 0 15px; gap: 4px; }
.pane .slim { flex-basis: 13px; height: 13px; }
.pane li button { width: 12px; margin: 0 1px 0 -17px; }
.pane li button svg { width: 9px; height: 9px; }
.k0 { padding-left: 17px; } .k1 { padding-left: 32px; } .k2 { padding-left: 47px; } .k3 { padding-left: 62px; } .k4 { padding-left: 77px; }
.hbar { grid-column: 1 / -1; background: #f3f3f3; display: flex; justify-content: space-between; align-items: center; padding: 0 15px 0 3px; }
.hbar i { border: 3px solid transparent; }
.hbar .l { border-left: 0; border-right: 5px solid #999; }
.hbar .r { border-right: 0; border-left: 5px solid #999; }
.pane .track { padding-left: 5px; }
.pane .track i { height: 84px; }
.acts { display: flex; justify-content: space-between; margin-top: 6px; font-size: 8px; font-family: "Noto Sans CJK JP", sans-serif; }
.acts button { height: 15px; width: 89px; background: #fff; border: 1px solid #ccc; border-radius: 3px; white-space: nowrap; line-height: 13px; }
.acts .help { width: 55px; display: block; }
.status { height: 19px; flex: none; display: flex; justify-content: flex-end; padding: 2px 15px 2px 0; border-top: 1px solid #e4e4e4; }
.status div { width: 269px; border-top: 1px solid #777; border-left: 1px solid #777; display: flex; align-items: center; padding: 0 4px; white-space: nowrap; }
.status span { width: 27px; }
.status b { width: 48px; font-weight: 400; flex: 0 1 auto; }
.status em { font-style: normal; margin-left: auto; }
```
